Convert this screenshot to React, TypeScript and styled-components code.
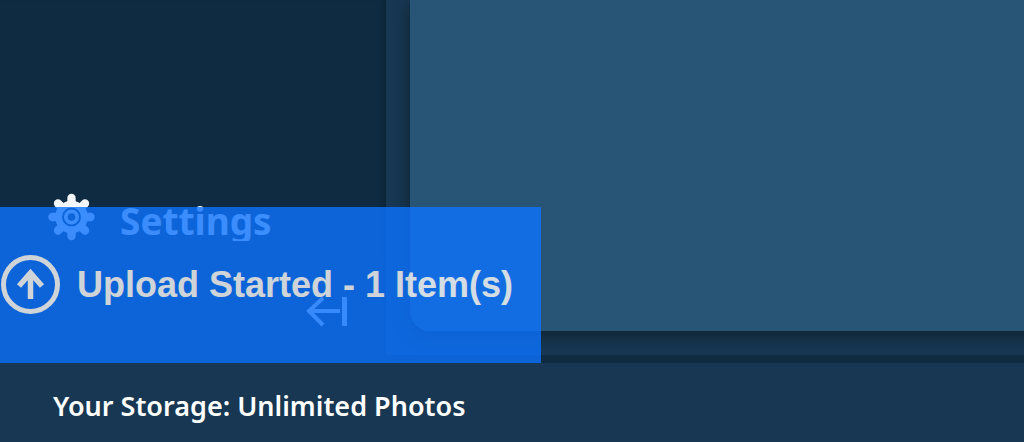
import React from 'react';
import styled, { createGlobalStyle } from 'styled-components';

const GlobalStyle = createGlobalStyle`
  *, *::before, *::after { box-sizing: border-box; }
  html, body, #root { height: 100%; }
  body { margin: 0; background: #173752; overflow: hidden; }
  button { font: inherit; color: inherit; background: none; border: 0; padding: 0; cursor: pointer; }
`;

const Shell = styled.div`
  display: flex;
  flex-direction: column;
  min-height: 100%;
  color: #fff;
  font-family: 'Segoe UI', 'Noto Sans', 'Open Sans', sans-serif;
`;

const Workspace = styled.div`
  position: relative;
  flex: 1;
  display: flex;
  border-bottom: 8px solid #0f2b42;
`;

const Sidebar = styled.aside`
  display: flex;
  flex-direction: column;
  justify-content: flex-end;
  flex: 0 0 386px;
  padding: 0 38px 28px 48px;
  background: #0f2b42;
  box-shadow: inset -6px 0 4px -2px #0d2639;
`;

const NavButton = styled.button`
  display: flex;
  align-items: center;
  gap: 25px;
  align-self: flex-start;
`;

const NavLabel = styled.span`
  height: 48px;
  overflow: hidden;
  color: #f4f7fa;
  font-size: 37px;
  font-weight: 700;
  line-height: 56px;
`;

const CollapseButton = styled.button`
  display: flex;
  align-self: flex-end;
  margin-top: 56px;
`;

const Main = styled.main`
  flex: 1;
  display: flex;
  padding: 0 0 24px 24px;
  overflow: hidden;
`;

const Panel = styled.section`
  flex: 1;
  margin-right: -24px;
  border-bottom-left-radius: 20px;
  background: #285576;
  box-shadow: 0 4px 16px rgba(8, 24, 32, 0.7);
`;

const Toast = styled.div`
  position: absolute;
  left: 0;
  bottom: -8px;
  display: flex;
  align-items: center;
  gap: 16px;
  height: 156px;
  padding: 0 28px 0 1px;
  background: #0d73ff;
  opacity: 0.8;
  font-family: Arial, 'Liberation Sans', sans-serif;
  font-size: 36px;
  font-weight: 700;
  white-space: nowrap;
`;

const Footer = styled.footer`
  padding: 25px 53px 19px;
  font-size: 27px;
  font-weight: 600;
  line-height: 35px;
`;

const teeth = [0, 45, 90, 135, 180, 225, 270, 315];

function GearIcon() {
  return (
    <svg width="47" height="48" viewBox="-24 -24 48 48" fill="none" stroke="#f4f7fa" aria-hidden="true">
      {teeth.map((angle) => (
        <path key={angle} d="M0-14V-19.5" strokeWidth="8.5" strokeLinecap="round" transform={`rotate(${angle})`} />
      ))}
      <circle r="13.2" strokeWidth="7" />
      <circle r="5.8" strokeWidth="3.8" />
    </svg>
  );
}

function CollapseIcon() {
  return (
    <svg width="42" height="30" viewBox="0 0 42 30" fill="none" stroke="#dfe8f0" strokeWidth="4" aria-hidden="true">
      <path d="M34 14H3M17 1L3 14L17 28" />
      <path d="M38.5 0V29" strokeWidth="5" />
    </svg>
  );
}

function UploadIcon() {
  return (
    <svg width="60" height="60" viewBox="0 0 60 60" fill="none" stroke="#fff" strokeWidth="5" aria-hidden="true">
      <circle cx="29.5" cy="29.5" r="27" />
      <path d="M29.5 44V18M18 31L29.5 18L41 31" strokeWidth="5.5" />
    </svg>
  );
}

export default function App() {
  return (
    <>
      <GlobalStyle />
      <Shell>
        <Workspace>
          <Sidebar>
            <NavButton type="button">
              <GearIcon />
              <NavLabel>Settings</NavLabel>
            </NavButton>
            <CollapseButton type="button" aria-label="Collapse sidebar">
              <CollapseIcon />
            </CollapseButton>
          </Sidebar>
          <Main>
            <Panel />
          </Main>
          <Toast role="status">
            <UploadIcon />
            <span>Upload Started - 1 Item(s)</span>
          </Toast>
        </Workspace>
        <Footer>Your Storage: Unlimited Photos</Footer>
      </Shell>
    </>
  );
}
